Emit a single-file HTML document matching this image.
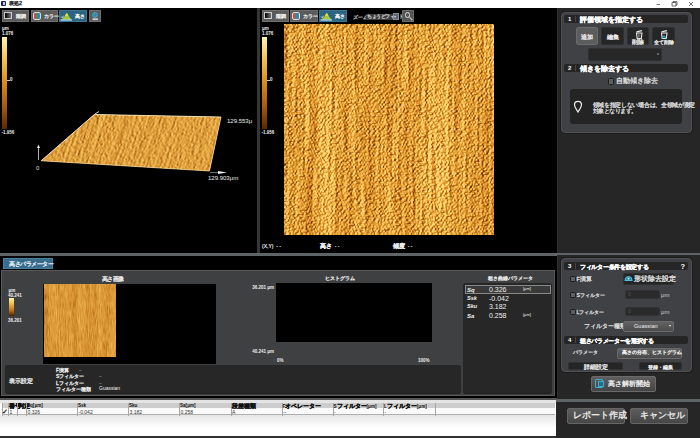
<!DOCTYPE html>
<html><head><meta charset="utf-8">
<style>
*{margin:0;padding:0;box-sizing:border-box}
html,body{width:700px;height:438px;overflow:hidden;background:#000;font-family:"Liberation Sans",sans-serif;color:#ddd}
.a{position:absolute}
.t{position:absolute;white-space:nowrap;line-height:1}
.btn{position:absolute;height:11px;background:#5b5b5b;border:1px solid #6e6e6e}
.btnb{background:#2c6582;border-color:#3a7592}
.bt{position:absolute;top:3px;font-size:5px;color:#eee;line-height:1;white-space:nowrap}
.ic{position:absolute;top:1px;left:1px;width:8px;height:7px;border:1px solid #ccc;background:linear-gradient(90deg,#000,#777)}
.pan{position:absolute;background:#404144;border:1px solid #505050;border-radius:4px;box-shadow:0 0 0 1px #1c1c1c}
.hd{position:absolute;height:8px;background:#252525;border-radius:2px}
.hn{position:absolute;left:4px;top:1px;font-size:6px;line-height:1;color:#fff;font-weight:bold}
.hs{position:absolute;left:11px;top:1px;width:1px;height:6px;background:#444}
.ht{position:absolute;left:16px;top:1.5px;font-size:6.6px;-webkit-text-stroke:0.3px #fff;line-height:1;color:#fff;font-weight:bold;white-space:nowrap}
.sb{position:absolute;background:#252525;border:1px solid #303030;border-radius:2px}
.sel{background:#5c5c5c;border-color:#6c6c6c}
.st{position:absolute;left:0;width:100%;text-align:center;font-size:4px;line-height:1;color:#eee;white-space:nowrap}
.cb{position:absolute;width:6.5px;height:6.5px;margin:-0.5px 0 0 -0.5px;background:#5e5e5e;border:1px solid #1c1c1c;border-radius:1.5px}
.j{-webkit-text-stroke:0.3px currentColor}
</style></head><body>
<svg width="0" height="0" style="position:absolute">
<defs>
<filter id="wood" x="0" y="0" width="100%" height="100%" color-interpolation-filters="sRGB">
  <feTurbulence type="fractalNoise" baseFrequency="1.0 0.45" numOctaves="2" seed="3" result="n1"/>
  <feTurbulence type="fractalNoise" baseFrequency="0.3 0.015" numOctaves="2" seed="11" result="n2"/>
  <feTurbulence type="fractalNoise" baseFrequency="0.06 0.004" numOctaves="2" seed="17" result="n3"/>
  <feComposite in="n1" in2="n2" operator="arithmetic" k1="0" k2="0.8" k3="0.25" k4="-0.03" result="h0"/>
  <feColorMatrix in="h0" type="matrix" values="0 0 0 0 0  0 0 0 0 0  0 0 0 0 0  1 0 0 0 0" result="ha"/>
  <feDiffuseLighting in="ha" surfaceScale="4.5" diffuseConstant="1.0" lighting-color="#fff" result="lit">
    <feDistantLight azimuth="200" elevation="50"/>
  </feDiffuseLighting>
  <feColorMatrix in="lit" type="matrix" values="1 0 0 0 0  1 0 0 0 0  1 0 0 0 0  0 0 0 0 1" result="g0"/>
  <feColorMatrix in="n3" type="matrix" values="1 0 0 0 0  1 0 0 0 0  1 0 0 0 0  0 0 0 0 1" result="b3"/>
  <feComposite in="g0" in2="b3" operator="arithmetic" k1="0" k2="1" k3="0.35" k4="-0.17" result="g"/>
  <feComponentTransfer in="g">
    <feFuncR type="table" tableValues="0.36 0.48 0.62 0.76 0.86 0.94 1"/>
    <feFuncG type="table" tableValues="0.18 0.25 0.34 0.46 0.57 0.70 0.86"/>
    <feFuncB type="table" tableValues="0.03 0.05 0.07 0.11 0.17 0.27 0.48"/>
    <feFuncA type="linear" slope="0" intercept="1"/>
  </feComponentTransfer>
</filter>
<filter id="wood2" x="0" y="0" width="100%" height="100%" color-interpolation-filters="sRGB">
  <feTurbulence type="fractalNoise" baseFrequency="0.9 0.12" numOctaves="2" seed="5" result="n1"/>
  <feTurbulence type="fractalNoise" baseFrequency="0.15 0.01" numOctaves="2" seed="9" result="n2"/>
  <feColorMatrix in="n1" type="matrix" values="1 0 0 0 0  1 0 0 0 0  1 0 0 0 0  0 0 0 0 1" result="g1"/>
  <feColorMatrix in="n2" type="matrix" values="1 0 0 0 0  1 0 0 0 0  1 0 0 0 0  0 0 0 0 1" result="g2"/>
  <feComposite in="g1" in2="g2" operator="arithmetic" k1="0" k2="0.6" k3="0.5" k4="-0.05" result="g"/>
  <feComponentTransfer in="g">
    <feFuncR type="linear" slope="1.5" intercept="-0.25"/>
    <feFuncG type="linear" slope="1.5" intercept="-0.25"/>
    <feFuncB type="linear" slope="1.5" intercept="-0.25"/>
  </feComponentTransfer>
  <feComponentTransfer>
    <feFuncR type="table" tableValues="0.68 0.80 0.86 0.91 0.96"/>
    <feFuncG type="table" tableValues="0.40 0.52 0.60 0.67 0.76"/>
    <feFuncB type="table" tableValues="0.08 0.16 0.22 0.28 0.38"/>
    <feFuncA type="linear" slope="0" intercept="1"/>
  </feComponentTransfer>
</filter>
<filter id="wood3" x="0" y="0" width="100%" height="100%" color-interpolation-filters="sRGB">
  <feTurbulence type="fractalNoise" baseFrequency="1.1 0.3" numOctaves="2" seed="8" result="n1"/>
  <feTurbulence type="fractalNoise" baseFrequency="0.3 0.008" numOctaves="2" seed="13" result="n2"/>
  <feComposite in="n1" in2="n2" operator="arithmetic" k1="0" k2="0.7" k3="0.4" k4="-0.05" result="h0"/>
  <feColorMatrix in="h0" type="matrix" values="0 0 0 0 0  0 0 0 0 0  0 0 0 0 0  1 0 0 0 0" result="ha"/>
  <feDiffuseLighting in="ha" surfaceScale="3.5" diffuseConstant="1.0" lighting-color="#fff" result="lit">
    <feDistantLight azimuth="200" elevation="50"/>
  </feDiffuseLighting>
  <feColorMatrix in="lit" type="matrix" values="1 0 0 0 0  1 0 0 0 0  1 0 0 0 0  0 0 0 0 1" result="g"/>
  <feComponentTransfer in="g">
    <feFuncR type="table" tableValues="0.40 0.52 0.64 0.76 0.85 0.92 0.98"/>
    <feFuncG type="table" tableValues="0.22 0.30 0.39 0.50 0.59 0.69 0.82"/>
    <feFuncB type="table" tableValues="0.03 0.06 0.1 0.15 0.21 0.3 0.45"/>
    <feFuncA type="linear" slope="0" intercept="1"/>
  </feComponentTransfer>
</filter>
</defs>
</svg>

<!-- title bar -->
<div class="a" style="left:0;top:0;width:700px;height:8px;background:#fff"></div>
<div class="a" style="left:1px;top:1px;width:5px;height:5px;background:#1e2a50;border-radius:1px"></div>
<div class="a" style="left:3px;top:2px;width:2px;height:3px;background:#c8c8e0"></div>
<div class="t j" style="left:9px;top:1.2px;font-size:5.4px;color:#333;-webkit-text-stroke:0.4px #333">表処2</div>
<svg class="a" style="left:650px;top:0" width="50" height="8"><path d="M6.5 4.5 H10" stroke="#555" stroke-width="0.8"/><path d="M22 2.5 H26 V6 H22 Z M23 2.5 V1.6 H27 V5 H26" fill="none" stroke="#444" stroke-width="0.8"/><path d="M39 2 L43 6 M43 2 L39 6" stroke="#444" stroke-width="0.8"/></svg>

<!-- top black area -->
<div class="a" style="left:0;top:8px;width:557px;height:245px;background:#000"></div>
<!-- vertical separator -->
<div class="a" style="left:257.3px;top:8px;width:2.6px;height:245px;background:#363636"></div>

<!-- ===== Left 3D view ===== -->
<div class="btn" style="left:2px;top:10px;width:27px;height:12px"><div class="ic"></div><div class="bt j" style="left:13px;top:3px;font-size:5.4px">階調</div></div>
<div class="btn" style="left:31px;top:10px;width:27px;height:12px">
  <div class="a" style="left:1px;top:1px;width:8px;height:8px;border-radius:2px;background:linear-gradient(90deg,#e04060 0,#e04060 33%,#30a040 33%,#30a040 66%,#3080e0 66%);border:1px solid #ddd"></div>
  <div class="bt j" style="left:12px;top:3.5px;font-size:4.6px">カラー</div></div>
<div class="btn btnb" style="left:59px;top:10px;width:28px;height:12px">
  <svg class="a" style="left:0;top:0" width="14" height="11"><path d="M1.5 8.5 L4.5 5.5 L6 2.5 L7.5 2.5 L9 5.5 L11.5 8.5 Z" fill="#a8c838"/><path d="M5.2 5 L6.2 2.5 L7.3 2.5 L8.2 5 Z" fill="#f0e040"/><path d="M1 5.5 L2.3 6.8 L3.5 4.8" stroke="#eee" stroke-width="0.8" fill="none"/><path d="M0.5 9 H12" stroke="#bfe8f8" stroke-width="1.2"/></svg>
  <div class="bt j" style="left:15px;top:3px;font-size:5.4px">高さ</div></div>
<div class="btn" style="left:89px;top:10px;width:12px;height:12px">
  <svg class="a" style="left:0;top:0" width="11" height="11"><circle cx="5" cy="4" r="2.4" fill="#2a8aa8" stroke="#48b8d8" stroke-width="0.8"/><rect x="2.5" y="7.3" width="5.5" height="1.8" fill="#ccc"/></svg></div>

<!-- color bar left -->
<div class="t" style="left:2px;top:27px;font-size:4.5px;color:#eee;font-weight:bold">μm</div>
<div class="t" style="left:2px;top:32px;font-size:4.5px;color:#eee;font-weight:bold">1.076</div>
<div class="a" style="left:2px;top:37px;width:5px;height:92px;background:linear-gradient(180deg,#fff4b0 0%,#f0c050 25%,#d88a20 50%,#a85a10 75%,#5a2800 100%)"></div>
<div class="a" style="left:7px;top:80px;width:3px;height:1px;background:#ccc"></div>
<div class="t" style="left:10px;top:77.5px;font-size:4.5px;color:#eee;font-weight:bold">0</div>
<div class="t" style="left:1.5px;top:131px;font-size:4.5px;color:#eee;font-weight:bold">-1.956</div>

<!-- 3D surface -->
<svg class="a" style="left:0;top:100px" width="258" height="90">
  <defs><clipPath id="para"><polygon points="94.3,14.5 221,17 209.5,71 41.2,60.8"/></clipPath></defs>
  <g clip-path="url(#para)">
    <rect x="30" y="10" width="200" height="70" fill="#cf9438"/>
    <g transform="matrix(0.75,0.045,0.2,-0.6,41.2,60.8)"><rect x="-40" y="-20" width="300" height="120" filter="url(#wood3)"/></g>
  </g>
  <polyline points="41.2,60.8 94.3,14.5 221,17" stroke="#fff0c8" stroke-width="0.9" fill="none" opacity="0.95"/>
  <polyline points="41.2,60.8 209.5,71 221,17" stroke="#f8e4b0" stroke-width="0.8" fill="none" opacity="0.85"/>
  <polyline points="38.5,60 38.5,46" stroke="#ddd" stroke-width="0.8" fill="none"/>
  <polygon points="37,48 38.5,44.5 40,48" fill="#eee"/>
  <line x1="95" y1="14" x2="99" y2="11.5" stroke="#ddd" stroke-width="1"/>
  <line x1="210" y1="72.5" x2="222" y2="72.5" stroke="#888" stroke-width="0.8"/>
  <polygon points="218,71 227,72.5 218,74" fill="#eee"/>
</svg>
<div class="t" style="left:36px;top:165px;font-size:6px;color:#ddd">0</div>
<div class="t" style="left:227px;top:118px;font-size:6px;color:#eee">129.553μ</div>
<div class="t" style="left:208px;top:175px;font-size:6px;color:#eee">129.903μm</div>

<!-- ===== Right 2D view ===== -->
<div class="btn" style="left:262px;top:10px;width:27px;height:12px"><div class="ic"></div><div class="bt j" style="left:13px;top:3px;font-size:5.4px">階調</div></div>
<div class="btn" style="left:290px;top:10px;width:28px;height:12px">
  <div class="a" style="left:1px;top:1px;width:8px;height:8px;border-radius:2px;background:linear-gradient(90deg,#e04060 0,#e04060 33%,#30a040 33%,#30a040 66%,#3080e0 66%);border:1px solid #ddd"></div>
  <div class="bt j" style="left:12px;top:3.5px;font-size:4.6px">カラー</div></div>
<div class="btn btnb" style="left:319px;top:10px;width:28px;height:12px">
  <svg class="a" style="left:0;top:0" width="14" height="11"><path d="M1.5 8.5 L4.5 5.5 L6 2.5 L7.5 2.5 L9 5.5 L11.5 8.5 Z" fill="#a8c838"/><path d="M5.2 5 L6.2 2.5 L7.3 2.5 L8.2 5 Z" fill="#f0e040"/><path d="M1 5.5 L2.3 6.8 L3.5 4.8" stroke="#eee" stroke-width="0.8" fill="none"/><path d="M0.5 9 H12" stroke="#bfe8f8" stroke-width="1.2"/></svg>
  <div class="bt j" style="left:15px;top:3px;font-size:5.4px">高さ</div></div>
<div class="t j" style="left:353px;top:14.5px;font-size:5px;color:#bbb">ズーム</div>
<div class="a" style="left:366px;top:14px;width:27px;height:6px;background:#3c3c3c"></div>
<div class="t j" style="left:367px;top:15px;font-size:4.6px;color:#ccc;letter-spacing:-0.5px">ちょうどフィット</div>
<div class="a" style="left:392.5px;top:13px;width:6px;height:7px;background:#5c6670;border:0.5px solid #889"></div>
<div class="a" style="left:394px;top:16px;width:0;height:0;border-left:1.5px solid transparent;border-right:1.5px solid transparent;border-top:2px solid #ddd"></div>
<div class="a" style="left:402px;top:10px;width:12px;height:11.5px;background:#555;border:1px solid #6a6a6a"></div>
<div class="a" style="left:404.5px;top:12px;width:5.5px;height:5.5px;border:1px solid #ddd;border-radius:50%"></div>
<div class="a" style="left:408.5px;top:17.5px;width:3.5px;height:1px;background:#ddd;transform:rotate(45deg)"></div>

<!-- color bar right -->
<div class="t" style="left:262px;top:27px;font-size:4.5px;color:#eee;font-weight:bold">μm</div>
<div class="t" style="left:262px;top:32px;font-size:4.5px;color:#eee;font-weight:bold">1.076</div>
<div class="a" style="left:262px;top:37px;width:5px;height:92px;background:linear-gradient(180deg,#fff4b0 0%,#f0c050 25%,#d88a20 50%,#a85a10 75%,#5a2800 100%)"></div>
<div class="a" style="left:267px;top:80px;width:3px;height:1px;background:#ccc"></div>
<div class="t" style="left:270px;top:77.5px;font-size:4.5px;color:#eee;font-weight:bold">0</div>
<div class="t" style="left:261.5px;top:131px;font-size:4.5px;color:#eee;font-weight:bold">-1.956</div>

<svg class="a" style="left:284px;top:24px" width="210" height="211"><rect x="0" y="0" width="211" height="211" filter="url(#wood)"/></svg>

<div class="t" style="left:262px;top:244px;font-size:5px;color:#eee;font-weight:bold">(X,Y)&nbsp;&nbsp;- -</div>
<div class="t" style="left:320px;top:244px;font-size:5px;color:#eee;font-weight:bold"><span class="j" style="font-size:5.6px">高さ</span>&nbsp;&nbsp;- -</div>
<div class="t" style="left:393px;top:244px;font-size:5px;color:#eee;font-weight:bold"><span class="j" style="font-size:5.6px">傾度</span>&nbsp;&nbsp;- -</div>

<!-- side panel top -->
<div class="a" style="left:557px;top:8px;width:143px;height:245px;background:#262626;border-left:1.5px solid #2e2e2e"></div>
<div class="pan" style="left:561px;top:12px;width:131px;height:121px"></div>
<div class="hd" style="left:564px;top:15px;width:124px"><b class="hn">1</b><i class="hs"></i><span class="ht">評価領域を指定する</span></div>
<div class="sb sel" style="left:576px;top:27px;width:22px;height:18px"><span class="st j" style="top:6px;font-size:6px">追加</span></div>
<div class="sb" style="left:601px;top:27px;width:23px;height:18px"><span class="st j" style="top:6px;font-size:6px">編集</span></div>
<div class="sb" style="left:627px;top:27px;width:22px;height:18px">
  <svg class="a" style="left:6px;top:1px" width="10" height="10"><path d="M2.5 2.8 L8 1.6" stroke="#e8e8e8" stroke-width="1.2"/><path d="M2.5 4 H8 L7.3 9.5 H3.2 Z" fill="none" stroke="#e8e8e8" stroke-width="1.1"/><path d="M4.6 5 V8.5 M5.9 5 V8.5" stroke="#aaa" stroke-width="0.6"/></svg>
  <span class="st j" style="top:11.5px;font-size:5.5px">削除</span></div>
<div class="sb" style="left:652px;top:27px;width:23px;height:18px">
  <svg class="a" style="left:6px;top:1px" width="10" height="10"><path d="M2.5 2.8 L8 1.6" stroke="#e8e8e8" stroke-width="1.2"/><path d="M2.5 4 H8 L7.3 9.5 H3.2 Z" fill="none" stroke="#e8e8e8" stroke-width="1.1"/><path d="M3 9.5 L5 7 L7 9.5" stroke="#2ab0d0" stroke-width="1.2" fill="none"/></svg>
  <span class="st j" style="top:11.5px;font-size:5.4px">全て削除</span></div>
<div class="a" style="left:588px;top:48px;width:74px;height:13px;background:#272727;border:1px solid #303030;border-radius:2px"></div>
<div class="a" style="left:657px;top:53px;width:2px;height:2px;background:#666"></div>

<div class="hd" style="left:564px;top:64px;width:124px"><b class="hn">2</b><i class="hs"></i><span class="ht">傾きを除去する</span></div>
<div class="a" style="left:607.5px;top:78px;width:6.5px;height:6.5px;background:#5e5e5e;border:1px solid #1c1c1c;border-radius:1.5px"></div>
<div class="t j" style="left:615.5px;top:77.5px;font-size:6.6px;color:#ddd">自動傾き除去</div>
<div class="a" style="left:569.5px;top:88.5px;width:112.5px;height:35px;background:#242424;border-radius:3px"></div>
<svg class="a" style="left:572px;top:99px" width="12" height="15"><path d="M6 13 C4.5 10.5 2.5 8.5 2.5 5.8 A3.5 3.5 0 0 1 9.5 5.8 C9.5 8.5 7.5 10.5 6 13 Z" fill="none" stroke="#eee" stroke-width="1.2"/></svg>
<div class="t j" style="left:592.5px;top:101.5px;font-size:6.2px;letter-spacing:-0.3px;color:#ddd">領域を指定しない場合は、全領域が測定</div>
<div class="t j" style="left:592.5px;top:108.2px;font-size:6.2px;letter-spacing:-0.5px;color:#ddd">対象となります。</div>

<!-- horizontal separator -->
<div class="a" style="left:0;top:253px;width:700px;height:2.6px;background:#5f6566"></div>

<!-- bottom area -->
<div class="a" style="left:557px;top:255px;width:143px;height:144px;background:#262626;border-left:1.5px solid #2e2e2e"></div>
<div class="a" style="left:556px;top:402px;width:144px;height:36px;background:#262626"></div>
<div class="a" style="left:556px;top:399px;width:144px;height:3px;background:#5f6566"></div>
<div class="pan" style="left:561px;top:258px;width:131px;height:114px"></div>
<div class="hd" style="left:564px;top:262px;width:124px"><b class="hn">3</b><i class="hs"></i><span class="ht" style="font-size:6.2px;top:1.7px;letter-spacing:-0.3px">フィルター条件を設定する</span><b class="hn" style="left:116.5px;top:0.5px;font-size:7.5px">?</b></div>
<div class="cb" style="left:570px;top:276px"></div><div class="t j" style="left:576.5px;top:276.5px;font-size:5.6px;color:#ddd">F演算</div>
<div class="a" style="left:623px;top:273px;width:51px;height:12px;background:#252525;border:1px solid #303030;border-radius:2px"></div>
<svg class="a" style="left:624px;top:274px" width="9" height="9"><path d="M1 6 A3.5 3.5 0 0 1 8 6" fill="#2a8aa8" stroke="#4cc0e0" stroke-width="1"/><path d="M0.5 6.5 H8.5" stroke="#4cc0e0" stroke-width="1"/><circle cx="4.5" cy="4.6" r="0.9" fill="#dff"/></svg>
<div class="t j" style="left:633.5px;top:275.8px;font-size:6.6px;color:#e4e4e4">形状除去設定</div>
<div class="cb" style="left:570px;top:292px"></div><div class="t j" style="left:576.5px;top:292.5px;font-size:5.2px;color:#ddd">Sフィルター</div>
<div class="a" style="left:625px;top:290px;width:35px;height:9px;background:#2a2a2a;border:1px solid #333;border-radius:2px"></div>
<div class="t" style="left:628px;top:292px;font-size:5px;color:#555">0</div>
<div class="t" style="left:661px;top:292px;font-size:6px;color:#ccc">μm</div>
<div class="cb" style="left:570px;top:309px"></div><div class="t j" style="left:576.5px;top:309.5px;font-size:5.2px;color:#ddd">Lフィルター</div>
<div class="a" style="left:625px;top:307px;width:35px;height:9px;background:#2a2a2a;border:1px solid #333;border-radius:2px"></div>
<div class="t" style="left:628px;top:309px;font-size:5px;color:#555">0</div>
<div class="t" style="left:661px;top:309px;font-size:6px;color:#ccc">μm</div>
<div class="t j" style="left:584px;top:323.5px;font-size:5.6px;color:#ddd">フィルター種類</div>
<div class="a" style="left:623px;top:321px;width:51px;height:11px;background:linear-gradient(#626262,#4c4c4c);border:1px solid #6a6a6a;border-radius:2px"></div>
<div class="t" style="left:634px;top:323.5px;font-size:5.6px;color:#eee">Guassian</div>
<div class="a" style="left:669px;top:325px;width:0;height:0;border-left:1.5px solid transparent;border-right:1.5px solid transparent;border-top:2px solid #eee"></div>
<div class="hd" style="left:564px;top:336px;width:124px"><b class="hn">4</b><i class="hs"></i><span class="ht" style="font-size:6.2px;top:1.7px;letter-spacing:-0.35px">粗さパラメーターを選択する</span></div>
<div class="t j" style="left:573px;top:349.5px;font-size:5.4px;color:#ddd">パラメータ</div>
<div class="a" style="left:617px;top:348px;width:65px;height:11px;background:linear-gradient(#606060,#4a4a4a);border:1px solid #6a6a6a;border-radius:2px"></div>
<div class="t j" style="left:622px;top:350px;font-size:5.2px;color:#eee">高さの分布、ヒストグラム</div>
<div class="a" style="left:677px;top:352px;width:0;height:0;border-left:1.5px solid transparent;border-right:1.5px solid transparent;border-top:2px solid #eee"></div>
<div class="sb" style="left:568px;top:362px;width:55px;height:8px"><span class="st j" style="top:1px;font-size:6.2px">詳細設定</span></div>
<div class="sb" style="left:639px;top:362px;width:43px;height:8px"><span class="st j" style="top:1.5px;font-size:5.2px">登録・編集</span></div>
<div class="a" style="left:591px;top:376px;width:65px;height:16px;background:linear-gradient(#5e5e5e,#444);border:1px solid #6a6a6a;border-radius:2px"></div>
<div class="a" style="left:595px;top:379px;width:8px;height:9px;border:1px solid #3ab0d0;border-radius:1px"></div>
<div class="a" style="left:598px;top:381px;width:6px;height:6px;background:#2a6a88;border:1px solid #3ab0d0"></div>
<div class="t j" style="left:607.5px;top:380px;font-size:7.2px;color:#eee">高さ解析開始</div>
<div class="a" style="left:567px;top:408px;width:58px;height:16px;background:linear-gradient(#5c5c5c,#474747);border:1px solid #666;border-radius:2px"></div>
<div class="t j" style="left:573px;top:411px;font-size:8.5px;color:#eee">レポート作成</div>
<div class="a" style="left:630px;top:408px;width:58px;height:16px;background:linear-gradient(#5c5c5c,#474747);border:1px solid #666;border-radius:2px"></div>
<div class="t j" style="left:640px;top:411px;font-size:8.5px;color:#eee">キャンセル</div>

<!-- bottom-left height parameter panel -->
<div class="a" style="left:3px;top:258.4px;width:49.6px;height:10.6px;background:#376c8c;border:1px solid #4a80a0"></div>
<div class="t j" style="left:9px;top:260.5px;font-size:6px;letter-spacing:-0.5px;color:#e8f0f8">高さパラメーター</div>
<div class="a" style="left:1px;top:270px;width:553.5px;height:126px;background:#3f4042;border:1px solid #58595b"></div>
<div class="t j" style="left:101.5px;top:275.5px;font-size:6px;letter-spacing:-0.4px;color:#eee">高さ画像</div>
<div class="a" style="left:43px;top:284px;width:173px;height:80px;background:#000"></div>
<svg class="a" style="left:44px;top:284px" width="72" height="73"><rect x="0" y="0" width="72" height="73" filter="url(#wood2)"/></svg>
<div class="t" style="left:8.5px;top:289px;font-size:4.5px;color:#eee;font-weight:bold">μm</div>
<div class="t" style="left:8px;top:293.5px;font-size:4.5px;color:#eee;font-weight:bold">40.241</div>
<div class="a" style="left:9px;top:298px;width:5px;height:18px;background:linear-gradient(180deg,#fff4b0,#f0c050 30%,#c07018 70%,#4a2000)"></div>
<div class="t" style="left:8px;top:318.5px;font-size:4.5px;color:#eee;font-weight:bold">36.201</div>
<div class="t j" style="left:325px;top:275.5px;font-size:5.4px;color:#eee">ヒストグラム</div>
<div class="a" style="left:276px;top:283px;width:156px;height:59px;background:#000"></div>
<div class="t" style="left:250px;top:286px;width:24px;text-align:right;font-size:4.5px;color:#eee;font-weight:bold">36.201 μm</div>
<div class="t" style="left:250px;top:349.5px;width:24px;text-align:right;font-size:4.5px;color:#eee;font-weight:bold">40.241 μm</div>
<div class="t" style="left:277px;top:359px;font-size:4.5px;color:#eee;font-weight:bold">0%</div>
<div class="t" style="left:418px;top:359px;font-size:4.5px;color:#eee;font-weight:bold">100%</div>
<div class="t j" style="left:488px;top:275.5px;font-size:5.4px;color:#eee">粗さ曲線パラメータ</div>
<div class="a" style="left:463px;top:283px;width:89px;height:109.5px;background:#272727;border-radius:3px;box-shadow:0 1px 0 #1e1e1e"></div>
<div class="a" style="left:465px;top:285px;width:86px;height:9px;background:#3a3a3a;border:1px solid #888"></div>
<div class="t" style="left:467px;top:287px;font-size:6px;color:#eee;font-style:italic;font-weight:bold">Sq</div>
<div class="t" style="left:489px;top:286px;font-size:7px;color:#eee">0.326</div>
<div class="t" style="left:523px;top:287px;font-size:4px;color:#eee">[μm]</div>
<div class="t" style="left:467px;top:296px;font-size:5.6px;color:#eee;font-style:italic;font-weight:bold">Ssk</div>
<div class="t" style="left:489px;top:295px;font-size:7px;color:#eee">-0.042</div>
<div class="t" style="left:467px;top:304px;font-size:5.6px;color:#eee;font-style:italic;font-weight:bold">Sku</div>
<div class="t" style="left:489px;top:303px;font-size:7px;color:#eee">3.182</div>
<div class="t" style="left:467px;top:313px;font-size:6px;color:#eee;font-style:italic;font-weight:bold">Sa</div>
<div class="t" style="left:489px;top:312px;font-size:7px;color:#eee">0.258</div>
<div class="t" style="left:523px;top:313px;font-size:4px;color:#eee">[μm]</div>
<div class="a" style="left:5px;top:364.5px;width:456px;height:28px;background:#272727;border-radius:3px;box-shadow:0 1px 0 #1e1e1e"></div>
<div class="t j" style="left:9px;top:377.5px;font-size:6.4px;color:#eee">表示設定</div>
<div class="t j" style="left:56px;top:367.5px;font-size:5px;color:#eee">F演算</div>
<div class="t" style="left:79px;top:368px;font-size:4px;color:#eee">--</div>
<div class="t j" style="left:56px;top:374px;font-size:5px;color:#eee">Sフィルター</div>
<div class="t" style="left:99px;top:374px;font-size:4px;color:#eee">--</div>
<div class="t j" style="left:56px;top:380.5px;font-size:5px;color:#eee">Lフィルター</div>
<div class="t" style="left:99px;top:381px;font-size:4px;color:#eee">--</div>
<div class="t j" style="left:56px;top:387px;font-size:5.2px;color:#eee">フィルター種類</div>
<div class="t" style="left:99px;top:386px;font-size:5px;color:#eee">Guassian</div>
<div class="a" style="left:0;top:398px;width:557px;height:2px;background:#555"></div>
<div class="a" style="left:0;top:400px;width:556px;height:38px;background:linear-gradient(#e4e4e4 0,#e4e4e4 3px,#fff 3px,#fff 15px,#e6e6e6 15px,#f2f2f2 21px,#fff 28px)"></div>
<div class="a" style="left:1.5px;top:403px;width:553px;height:5.3px;background:#cdcdcd"></div>
<div class="a" style="left:1.5px;top:408.3px;width:553px;height:7px;background:#fafafa;border-bottom:1px solid #b0b0b0"></div>
<div class="a" style="left:1.5px;top:403px;width:1px;height:12.5px;background:#a8a8a8"></div>
<div class="a" style="left:8px;top:403px;width:1px;height:12.5px;background:#a8a8a8"></div><div class="t" style="left:9px;top:403.5px;color:#111;font-weight:bold;font-size:4.6px;line-height:4.6px"><span class="j" style="font-size:5.6px">番号</span></div><div class="t" style="left:9.5px;top:409.5px;font-size:5px;color:#333">1</div>
<div class="a" style="left:17px;top:403px;width:1px;height:12.5px;background:#a8a8a8"></div><div class="t" style="left:18px;top:403.5px;color:#111;font-weight:bold;font-size:4.6px;line-height:4.6px"><span class="j" style="font-size:5.6px">判定</span></div>
<div class="a" style="left:26px;top:403px;width:1px;height:12.5px;background:#a8a8a8"></div><div class="t" style="left:27px;top:403.5px;color:#111;font-weight:bold;font-size:4.6px;line-height:4.6px"><span style="font-size:4.6px">Sq[μm]</span></div><div class="t" style="left:27.5px;top:409.5px;font-size:5px;color:#333">0.326</div>
<div class="a" style="left:77px;top:403px;width:1px;height:12.5px;background:#a8a8a8"></div><div class="t" style="left:78px;top:403.5px;color:#111;font-weight:bold;font-size:4.6px;line-height:4.6px"><span style="font-size:4.6px">Ssk</span></div><div class="t" style="left:78.5px;top:409.5px;font-size:5px;color:#333">-0.042</div>
<div class="a" style="left:128px;top:403px;width:1px;height:12.5px;background:#a8a8a8"></div><div class="t" style="left:129px;top:403.5px;color:#111;font-weight:bold;font-size:4.6px;line-height:4.6px"><span style="font-size:4.6px">Sku</span></div><div class="t" style="left:129.5px;top:409.5px;font-size:5px;color:#333">3.182</div>
<div class="a" style="left:179px;top:403px;width:1px;height:12.5px;background:#a8a8a8"></div><div class="t" style="left:180px;top:403.5px;color:#111;font-weight:bold;font-size:4.6px;line-height:4.6px"><span style="font-size:4.6px">Sa[μm]</span></div><div class="t" style="left:180.5px;top:409.5px;font-size:5px;color:#333">0.258</div>
<div class="a" style="left:230.5px;top:403px;width:1px;height:12.5px;background:#a8a8a8"></div><div class="t" style="left:231.5px;top:403.5px;color:#111;font-weight:bold;font-size:4.6px;line-height:4.6px"><span class="j" style="font-size:5.6px">段差種類</span></div><div class="t" style="left:232.0px;top:409.5px;font-size:5px;color:#333">A</div>
<div class="a" style="left:281.5px;top:403px;width:1px;height:12.5px;background:#a8a8a8"></div><div class="t" style="left:282.5px;top:403.5px;color:#111;font-weight:bold;font-size:4.6px;line-height:4.6px"><span style="font-size:4.6px">F</span><span class="j" style="font-size:5.6px">オペレーター</span></div><div class="t" style="left:283.0px;top:409.5px;font-size:5px;color:#333">--</div>
<div class="a" style="left:332.5px;top:403px;width:1px;height:12.5px;background:#a8a8a8"></div><div class="t" style="left:333.5px;top:403.5px;color:#111;font-weight:bold;font-size:4.6px;line-height:4.6px"><span style="font-size:4.6px">S</span><span class="j" style="font-size:5.6px">フィルター</span><span style="font-size:4.6px">[μm]</span></div><div class="t" style="left:334.0px;top:409.5px;font-size:5px;color:#333">-</div>
<div class="a" style="left:383px;top:403px;width:1px;height:12.5px;background:#a8a8a8"></div><div class="t" style="left:384px;top:403.5px;color:#111;font-weight:bold;font-size:4.6px;line-height:4.6px"><span style="font-size:4.6px">L</span><span class="j" style="font-size:5.6px">フィルター</span><span style="font-size:4.6px">[μm]</span></div><div class="t" style="left:384.5px;top:409.5px;font-size:5px;color:#333">-</div>
<div class="a" style="left:434.5px;top:403px;width:1px;height:12.5px;background:#a8a8a8"></div>
<div class="t" style="left:2px;top:408.5px;font-size:6.5px;color:#111;font-weight:bold">✓</div>
<div class="a" style="left:0;top:436px;width:556px;height:2px;background:#333"></div>


</body></html>
